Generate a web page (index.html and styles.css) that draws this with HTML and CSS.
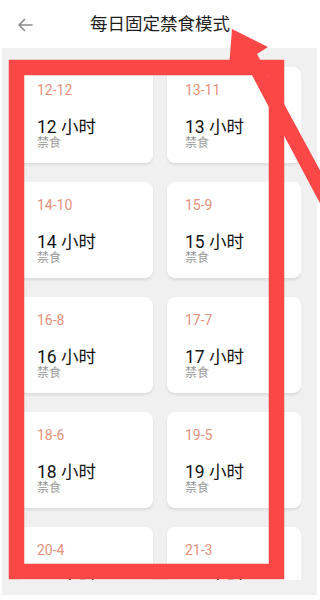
FILE: index.html
```html
<!DOCTYPE html>
<html lang="zh-CN">
<head>
<meta charset="utf-8">
<title>每日固定禁食模式</title>
<link rel="stylesheet" href="styles.css">
</head>
<body>
<div class="page">
  <header class="topbar">
    <span class="back">
      <svg width="16" height="14" viewBox="0 0 16 14"><path d="M15 7H2M7.5 1.5L2 7l5.5 5.5" fill="none" stroke="#8a8a8a" stroke-width="1.6" stroke-linecap="round" stroke-linejoin="round"/></svg>
    </span>
    <h1 class="title">每日固定禁食模式</h1>
    <span class="spacer"></span>
  </header>
  <main class="panel">
    <div class="scroller">
      <div class="grid">
        <div class="card"><div class="range">12-12</div><div class="hours">12 小时</div><div class="label">禁食</div></div>
        <div class="card"><div class="range">13-11</div><div class="hours">13 小时</div><div class="label">禁食</div></div>
        <div class="card"><div class="range">14-10</div><div class="hours">14 小时</div><div class="label">禁食</div></div>
        <div class="card"><div class="range">15-9</div><div class="hours">15 小时</div><div class="label">禁食</div></div>
        <div class="card"><div class="range">16-8</div><div class="hours">16 小时</div><div class="label">禁食</div></div>
        <div class="card"><div class="range">17-7</div><div class="hours">17 小时</div><div class="label">禁食</div></div>
        <div class="card"><div class="range">18-6</div><div class="hours">18 小时</div><div class="label">禁食</div></div>
        <div class="card"><div class="range">19-5</div><div class="hours">19 小时</div><div class="label">禁食</div></div>
        <div class="card"><div class="range">20-4</div><div class="hours">20 小时</div><div class="label">禁食</div></div>
        <div class="card"><div class="range">21-3</div><div class="hours">21 小时</div><div class="label">禁食</div></div>
      </div>
    </div>
  </main>
  <svg class="annotation" width="320" height="600" viewBox="0 0 320 600">
    <rect x="16.5" y="67.5" width="260" height="504" fill="none" stroke="#fc4747" stroke-width="15.5"/>
    <polygon points="232,29 268,47 257,54 340,207 340,241 245,62 229,68" fill="#fc4747"/>
  </svg>
</div>
</body>
</html>
```
FILE: styles.css
```css
* { box-sizing: border-box; }
html, body { margin: 0; padding: 0; background: #fff; }
body {
  font-family: Roboto, "Noto Sans CJK SC", sans-serif;
  width: 320px;
  height: 600px;
  overflow: hidden;
}
.page { position: relative; width: 320px; height: 600px; }
.topbar {
  height: 48px;
  display: grid;
  grid-template-columns: 48px 1fr 48px;
  align-items: center;
  background: #fff;
}
.back { display: flex; align-items: center; padding-left: 17px; padding-top: 1px; }
.title {
  margin: 0;
  text-align: center;
  font-size: 17.5px;
  font-weight: 400;
  color: #1e1e1e;
  line-height: 22px;
}
.panel {
  margin: 0 3px 0 2px;
  height: 547px;
  background: #f0f0f0;
  padding: 19px 16px 15px 17px;
}
.scroller { height: 513px; overflow: hidden; }
.grid {
  display: grid;
  grid-template-columns: 134px 134px;
  column-gap: 14px;
  row-gap: 19px;
}
.card {
  height: 96px;
  background: #fff;
  border-radius: 8px;
  box-shadow: 0 2px 3px rgba(0,0,0,0.09);
  padding: 15px 0 0 18px;
}
.range { font-size: 14px; line-height: 16px; color: #e5917c; }
.hours { margin-top: 20px; font-size: 17.5px; line-height: 18px; color: #141414; }
.label { font-size: 12px; line-height: 14px; color: #9a9a9a; }
.annotation { position: absolute; left: 0; top: 0; pointer-events: none; }
```
